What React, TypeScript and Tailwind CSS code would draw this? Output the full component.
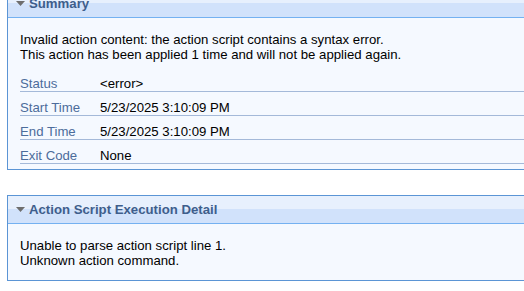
import React from 'react';

const rows = [
  { label: 'Status', value: '<error>' },
  { label: 'Start Time', value: '5/23/2025 3:10:09 PM' },
  { label: 'End Time', value: '5/23/2025 3:10:09 PM' },
  { label: 'Exit Code', value: 'None' },
];

const PanelHeader: React.FC<{ title: string }> = ({ title }) => (
  <div className="h-[28px] flex items-center pl-[8px] border-b border-[#74b1f1] bg-[linear-gradient(to_bottom,#e7f0fd_0%,#e7f0fd_48%,#d1e2fb_48%,#d1e2fb_100%)]">
    <svg width="9" height="5" viewBox="0 0 9 5" className="mr-[4px]">
      <polygon points="0,0 9,0 4.5,5" fill="#6e6e6e" />
    </svg>
    <span className="text-[13.2px] font-bold text-[#3e5e8c] leading-[15px]">{title}</span>
  </div>
);

const App: React.FC = () => {
  return (
    <div className="w-[524px] h-[291px] overflow-hidden bg-white font-['Liberation_Sans',Arial,sans-serif] text-[13.2px] leading-[15px] text-black">
      <div className="-mt-[11px] pl-[7px]">
        <section className="border border-r-0 border-[#5b95d5] bg-[#f5f9ff]">
          <PanelHeader title="Summary" />
          <div className="pt-[14px] pb-[5px] pl-[12px]">
            <p>Invalid action content: the action script contains a syntax error.</p>
            <p>This action has been applied 1 time and will not be applied again.</p>
            <div className="mt-[6px]">
              {rows.map((row) => (
                <div key={row.label} className="flex pt-[8px] border-b border-[#a4b9d9]">
                  <span className="w-[80px] text-[#4c6c9b]">{row.label}</span>
                  <span>{row.value}</span>
                </div>
              ))}
            </div>
          </div>
        </section>

        <section className="mt-[25px] border border-r-0 border-[#5b95d5] bg-[#f5f9ff]">
          <PanelHeader title="Action Script Execution Detail" />
          <div className="pt-[14px] pb-[12px] pl-[12px]">
            <p>Unable to parse action script line 1.</p>
            <p>Unknown action command.</p>
          </div>
        </section>
      </div>
    </div>
  );
};

export default App;
